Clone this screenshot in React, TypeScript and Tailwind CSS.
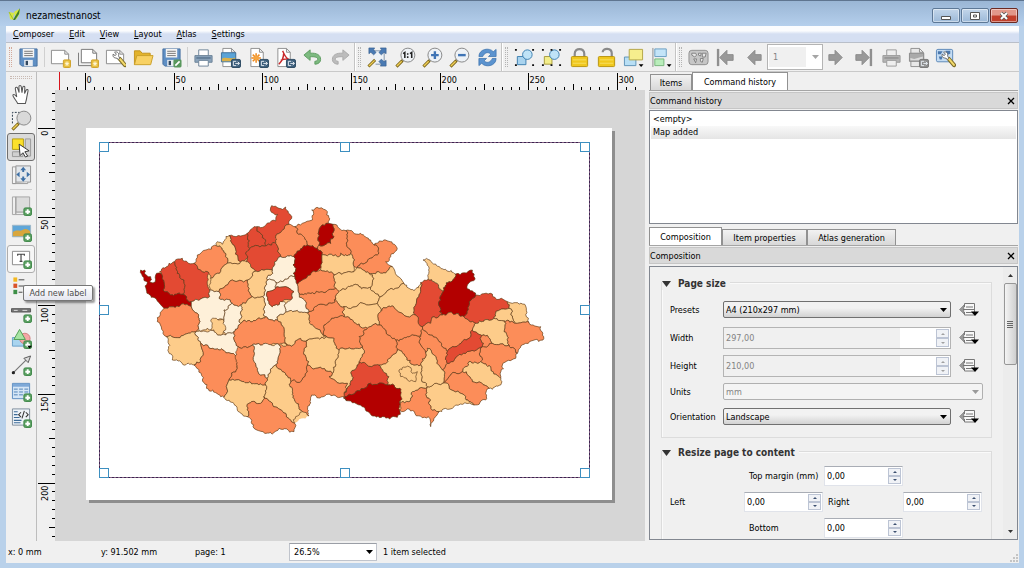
import React from "react";

type Pt = [number, number];

/* ---------- map ---------- */

const SHADES = ["#fef0d9", "#fdcc8a", "#fc8d59", "#e34a33", "#b30000"];

const OUTLINE =
  "35,225 47,225 52,240 65,245 62,260 72,264 80,240 92,230 120,205 137,200 160,190 195,205 205,180 230,165 262,152 265,140 280,148 300,122 355,115 375,95 405,95 440,78 446,58 424,46 428,32 450,40 470,36 478,54 488,70 480,88 497,95 520,85 550,75 548,45 570,40 595,50 598,85 612,88 650,107 695,115 725,135 735,150 770,135 802,155 785,185 770,200 790,215 825,265 855,287 875,263 898,253 945,287 980,237 1030,225 1015,270 1040,300 1090,297 1135,320 1150,325 1190,333 1200,383 1235,395 1242,435 1190,445 1165,475 1160,490 1120,510 1115,550 1115,570 1080,580 1070,615 1035,630 980,630 930,650 905,695 898,665 812,645 805,667 760,665 700,635 652,617 615,600 548,600 540,663 497,685 495,710 450,700 430,717 375,700 355,665 335,655 285,607 275,605 220,555 195,510 130,495 112,425 85,380 105,340 85,318 62,300 52,285 55,262 45,248 38,238";

const DISTRICTS: [number, string][] = [
  [3, "92,230 120,205 137,200 145,235 165,255 160,298 125,300 102,285 105,262 98,238"],
  [3, "137,200 160,190 195,205 240,235 242,285 242,305 215,312 187,320 160,298 165,255 145,235"],
  [4, "35,225 47,225 52,240 65,245 62,260 72,264 80,240 98,238 105,262 102,285 125,300 160,298 187,320 187,335 150,335 105,340 85,318 62,300 52,285 55,262 45,248 38,238"],
  [2, "195,205 205,180 230,165 262,152 290,175 295,205 265,235 245,250 240,235"],
  [1, "262,152 265,140 280,148 300,122 315,150 335,200 295,205 290,175"],
  [3, "300,122 355,115 362,160 350,175 355,190 335,200 315,150"],
  [3, "355,115 375,95 385,95 410,135 412,152 362,160"],
  [3, "385,95 405,95 440,78 446,58 424,46 428,32 450,40 470,36 478,54 488,70 480,88 440,125 440,140 412,152 410,135"],
  [3, "362,160 412,152 440,140 455,185 430,225 380,228 365,215 350,200 355,190 350,175"],
  [2, "480,88 497,95 505,115 530,135 535,150 520,160 495,185 455,185 440,140 440,125"],
  [2, "497,95 520,85 550,75 548,45 570,40 595,50 598,85 575,95 570,150 565,160 535,150 530,135 505,115"],
  [2, "612,88 630,100 650,107 655,140 665,175 635,175 625,185 600,178 578,180 565,160 570,150 605,145 615,125"],
  [4, "575,95 598,85 612,88 615,125 605,145 570,150"],
  [2, "650,107 695,115 725,135 735,150 748,165 745,180 715,200 685,218 675,215 665,175 655,140"],
  [2, "735,150 770,135 802,155 785,185 770,200 790,215 760,235 720,235 685,218 715,200 745,180 748,165"],
  [1, "578,180 600,178 625,185 635,175 665,175 675,215 675,230 615,240 595,228 575,225 575,210"],
  [1, "615,240 675,230 685,218 720,235 735,250 725,277 690,275 630,290 620,280 615,275"],
  [1, "720,235 760,235 790,215 825,265 800,280 755,305 725,277 735,250"],
  [1, "630,290 690,275 725,277 755,305 745,325 645,335 620,310"],
  [1, "755,305 800,280 825,265 855,287 875,263 870,305 860,360 835,365 785,335 755,350 745,325"],
  [3, "875,263 898,253 915,260 945,287 935,315 940,360 915,365 905,385 880,395 860,360 870,305"],
  [1, "898,253 900,230 882,195 920,207 980,237 960,260 945,287 915,260"],
  [3, "1040,300 1090,297 1135,320 1140,340 1100,355 1095,370 1040,385 1005,365 1020,320"],
  [4, "980,237 1030,225 1038,250 1015,270 1040,300 1020,320 1005,365 970,355 940,360 935,315 945,287 960,260"],
  [1, "1135,320 1150,325 1190,333 1200,383 1160,385 1150,350 1140,340"],
  [1, "1140,340 1150,350 1160,385 1125,378 1095,370 1100,355"],
  [2, "1125,378 1160,385 1200,383 1235,395 1242,435 1190,445 1165,475 1140,450 1125,410"],
  [1, "1035,393 1040,385 1095,370 1125,378 1125,410 1140,450 1090,445 1065,420 1030,405"],
  [2, "1060,455 1090,445 1140,450 1165,475 1160,490 1120,510 1115,550 1085,515 1055,500"],
  [2, "880,395 905,385 915,365 940,360 970,355 1005,365 1040,385 1035,393 1030,405 1020,430 970,455 955,470 930,440 895,415"],
  [2, "875,420 880,395 895,415 930,440 955,470 955,505 940,525 915,480 895,460 890,475 875,450"],
  [2, "940,525 955,505 965,500 1010,475 1060,455 1055,500 1020,500 1000,530 960,545 940,565"],
  [3, "955,505 955,470 970,455 1020,430 1030,405 1065,420 1060,455 1010,475 965,500"],
  [2, "1065,420 1090,445 1060,455"],
  [1, "1000,530 1020,500 1055,500 1085,515 1115,550 1115,570 1080,580 1030,560"],
  [2, "960,545 1000,530 1030,560 1080,580 1070,615 1035,630 1010,605 960,580 955,565 940,565"],
  [1, "895,575 940,565 955,565 960,580 1010,605 1035,630 980,630 930,650 905,640 900,610"],
  [2, "812,625 840,620 850,590 870,580 895,575 900,610 905,640 930,650 905,695 898,665 812,645"],
  [3, "645,595 668,540 690,500 750,510 780,545 775,570 680,590 645,610"],
  [1, "775,495 805,465 830,485 855,510 875,510 880,545 895,575 870,580 850,590 840,620 812,625 813,580 775,570 780,545 750,510"],
  [1, "810,525 840,515 850,535 865,530 860,560 835,555 815,545"],
  [4, "645,610 680,590 775,570 813,580 812,645 805,667 760,665 700,635 652,617"],
  [1, "875,510 890,475 895,460 915,480 940,525 940,565 895,575 880,545"],
  [2, "800,435 835,425 875,420 875,450 890,475 875,510 855,510 830,485 805,465"],
  [2, "750,390 755,350 785,335 835,365 860,360 880,395 875,420 835,425 800,435 770,405"],
  [1, "645,335 745,325 755,350 750,390 715,400 680,385 645,365 640,350"],
  [2, "690,425 715,400 750,390 770,405 800,435 805,465 775,495 750,510 690,500 700,455"],
  [2, "585,390 605,375 645,365 680,385 715,400 690,425 700,455 680,460 630,465 615,430 592,425"],
  [1, "630,465 680,460 700,455 690,500 668,540 645,595 655,565 600,545 610,535"],
  [1, "535,435 592,425 615,430 630,465 610,535 560,520 535,510"],
  [2, "535,510 560,520 610,535 600,545 655,565 645,595 645,610 652,617 615,600 548,600 540,663 520,650 490,590 485,560 515,560"],
  [2, "450,450 475,450 515,430 535,435 535,510 515,560 485,560 460,530 440,510"],
  [2, "535,355 540,350 590,330 620,310 645,335 640,350 645,365 605,375 585,390 592,425 550,390"],
  [1, "450,360 470,350 540,350 535,355 550,390 592,425 535,435 515,430 475,450 465,415 445,375"],
  [2, "510,295 545,295 580,290 620,280 630,290 620,310 590,330 540,350 530,330"],
  [2, "505,268 530,250 560,230 575,225 595,228 615,240 615,275 620,280 580,290 545,295 510,295"],
  [0, "430,225 455,185 495,185 492,210 500,225 498,245 460,260 440,262 415,255"],
  [0, "440,262 460,260 498,245 505,268 510,295 530,330 540,350 470,350 470,325 485,315 495,290 470,275 440,280"],
  [0, "415,255 440,262 440,280 415,290 430,335 460,320 470,325 470,350 450,360 445,375 410,365 410,330 400,305"],
  [3, "415,290 440,280 470,275 495,290 485,315 460,320 430,335"],
  [4, "495,185 520,160 535,150 565,160 578,180 575,210 560,230 530,250 505,268 498,245 500,225 492,210"],
  [1, "355,255 370,235 380,228 430,225 415,255 400,305 370,305 360,280"],
  [1, "265,235 295,205 335,200 355,190 350,200 365,215 380,228 370,235 355,255 310,255 270,290 242,285 245,250"],
  [2, "270,290 310,255 355,255 360,280 370,305 350,325 335,330 310,325 270,310"],
  [1, "335,330 350,325 370,305 400,305 410,330 410,365 345,375 335,385 340,345"],
  [0, "187,320 215,312 242,305 242,285 270,290 270,310 310,325 285,345 285,375 260,375 245,405 205,405 210,370 205,355 187,335"],
  [0, "310,325 335,330 340,345 335,385 315,410 290,420 285,375 285,345"],
  [0, "200,410 245,405 275,420 290,420 315,410 328,455 328,480 270,465 235,450 215,445"],
  [1, "245,378 262,370 285,378 290,405 275,420 245,405"],
  [2, "105,340 150,335 187,335 205,355 210,370 205,405 200,410 112,425 85,380"],
  [1, "112,425 200,410 215,445 215,500 195,510 130,495"],
  [2, "215,445 235,450 270,465 328,480 325,520 300,555 285,607 275,605 220,555 195,510 215,500"],
  [2, "315,410 335,385 345,375 410,365 445,375 465,415 475,450 410,445 370,450 328,455"],
  [2, "328,455 370,450 375,500 395,540 415,550 410,570 345,560 300,555 325,520"],
  [0, "370,450 410,445 450,450 440,510 425,530 415,550 395,540 375,500"],
  [1, "300,555 345,560 410,570 405,605 395,625 360,625 355,665 335,655 285,607"],
  [1, "440,510 460,530 485,560 490,590 520,650 500,665 497,685 470,655 405,605 410,570 415,550 425,530"],
  [2, "405,605 470,655 497,685 495,710 450,700 430,717 375,700 355,665 360,625 395,625"],
];

const noise = (a: Pt, b: Pt) => {
  const n = Math.sin(a[0] * 12.9898 + a[1] * 78.233 + b[0] * 37.719 + b[1] * 9.131) * 43758.5453;
  return (n - Math.floor(n)) * 2 - 1;
};

/* Splits an edge into a rough border line; both neighbours of an edge get the same line. */
function roughen(a: Pt, b: Pt): Pt[] {
  const flip = a[0] > b[0] || (a[0] === b[0] && a[1] > b[1]);
  const [p, q] = flip ? [b, a] : [a, b];
  const dx = q[0] - p[0];
  const dy = q[1] - p[1];
  const len = Math.hypot(dx, dy);
  if (len < 8) return [a];
  const k = noise(p, q) * (len > 24 ? 0.16 : 0.3);
  const m: Pt = [(p[0] + q[0]) / 2 - dy * k, (p[1] + q[1]) / 2 + dx * k];
  return [...roughen(a, m), ...roughen(m, b)];
}

function toPath(list: string) {
  const pts = list.split(" ").map((s) => s.split(",").map(Number) as Pt);
  const out = pts.flatMap((p, i) => roughen(p, pts[(i + 1) % pts.length]));
  return "M" + out.map((p) => p[0].toFixed(1) + " " + p[1].toFixed(1)).join("L") + "Z";
}

const RegionMap = () => (
  <svg viewBox="0 0 1290 735" className="absolute left-[30px] top-[53px] h-[245px] w-[430px]" role="img" aria-label="Map">
    <path d={toPath(OUTLINE)} fill="#fdcc8a" />
    {DISTRICTS.map(([c, d], i) => (
      <path key={i} d={toPath(d)} fill={SHADES[c]} stroke="#5c3a1c" strokeOpacity={0.85} strokeWidth={2.3} strokeLinejoin="round" />
    ))}
  </svg>
);

/* ---------- icons ---------- */

const Ico = ({ children }: { children: React.ReactNode }) => (
  <svg viewBox="0 0 22 22" className="h-[21px] w-[21px]" aria-hidden="true" fill="none">
    {children}
  </svg>
);

const Plus = () => (
  <g>
    <rect x="13.5" y="13.5" width="8" height="8" rx="1.5" fill="#5aa061" stroke="#3f8748" />
    <path d="M17.5 15v5M15 17.5h5" stroke="#fff" strokeWidth="2" />
  </g>
);
const Star = () => (
  <g>
    <rect x="14" y="13.5" width="7.500" height="8" rx="1" fill="#e7bd3a" stroke="#cfa12a" />
    <path d="M17.800 15v5M15.500 17.500h4.600M16.200 15.900l3.200 3.200M19.400 15.900l-3.200 3.200" stroke="#fff8d8" strokeWidth="1" />
  </g>
);
const Export = ({ grey }: { grey?: boolean }) => (
  <g>
    <rect x="12" y="13" width="9.500" height="8.500" rx="1.500" fill={grey ? "#8d8d8d" : "#3d5f7c"} stroke={grey ? "#777" : "#2c4a63"} />
    <path d="M17 15h-3v4.500h3M16 17.200h4M18.500 15.500l2 1.700-2 1.700" stroke="#e8eef4" strokeWidth="1" />
  </g>
);
const Sheet = () => <path d="M1.500 3.500h14l4 4v10h-18zM15.500 3.500v4h4" fill="#fff" stroke="#8b8b8b" />;
const Doc = ({ grey }: { grey?: boolean }) => (
  <path d="M3 1.500h9l4 4v15H3zM12 1.500v4h4" fill={grey ? "#e8e8e8" : "#fff"} stroke="#8f8f8f" />
);
const Floppy = () => (
  <g>
    <path d="M2 2h18v18H4l-2-2z" fill="#5f8fc4" stroke="#47709f" />
    <path d="M5 2h12v9H5z" fill="#f4f4f4" />
    <path d="M6.500 4.500h9M6.500 6.700h9M6.500 9h9" stroke="#777" strokeWidth="1" />
    <path d="M6.500 13.500h9v6.500h-9z" fill="#e9edf2" />
    <path d="M8 14.500h2.500v4.500H8z" fill="#31475e" />
  </g>
);
const Wrench = ({ x = 0 }: { x?: number }) => (
  <g transform={`translate(${x} 0)`}>
    <path d="M13.500 12.500l5.500 6.500" stroke="#7a6a28" strokeWidth="4.200" strokeLinecap="round" />
    <path d="M13.800 12.700l5 6" stroke="#f3d96a" strokeWidth="2.200" strokeLinecap="round" />
    <path d="M8 5.500l2 2-1.500 1.500-2-1.500c-.5 2 .5 4 2.500 4 1 0 2 .5 3 1.500l1.500-1.500c-1-1-1.500-2-1.200-3.200.5-2-1.800-4-4.300-2.800z" fill="#fff" stroke="#666" />
  </g>
);
const Printer = ({ grey }: { grey?: boolean }) => (
  <g stroke={grey ? "#9a9a9a" : "#6d8398"}>
    <path d="M6 9V3h10v6" fill={grey ? "#eee" : "#fff"} />
    <path d="M2 9h18v7H2z" fill={grey ? "#b4b4b4" : "#8aa3bb"} />
    <path d="M3.500 11.500h15" stroke={grey ? "#8a8a8a" : "#506c87"} strokeWidth="1.300" />
    <path d="M6 14h10v6H6z" fill={grey ? "#eee" : "#fff"} />
  </g>
);
const Lens = ({ children, grey }: { children?: React.ReactNode; grey?: boolean }) => (
  <g>
    <path d="M1.500 20.500l6.500-6.500" stroke="#7a6419" strokeWidth="3.200" />
    <path d="M2 20l5-5" stroke="#f0cf55" strokeWidth="1.500" />
    <circle cx="13.500" cy="8.500" r="7.300" fill={grey ? "#d9d9d9" : "#eef2f6"} stroke="#858585" />
    {children}
  </g>
);
const Lock = ({ open }: { open?: boolean }) => (
  <g>
    <path d={open ? "M7 5.500c0-5 9.500-5 9.500 1V11" : "M6 11V7c0-6.500 10-6.500 10 0v4"} stroke="#8a8a8a" strokeWidth="2.300" />
    <rect x="2.500" y="10" width="17" height="10.500" rx="1" fill="#f0c81e" stroke="#b8930f" />
    <path d="M4 13.500h14M4 17h14" stroke="#f8df62" />
  </g>
);
const Arrow = ({ left, bar }: { left?: boolean; bar?: boolean }) => (
  <g transform={left ? "translate(22 0) scale(-1 1)" : undefined}>
    <path d="M3 8h6.500V3.500L17 11l-7.500 7.500V14H3z" fill="#999" stroke="#8a8a8a" />
    {bar && <path d="M18.800 2v18" stroke="#8f8f8f" strokeWidth="2.500" />}
  </g>
);
const Drop = () => <path d="M16.500 18h5l-2.500 3z" fill="#000" />;
const Dots = () => (
  <path d="M1 2h2v2H1zM19 2h2v2h-2zM1 18h2v2H1zM19 18h2v2h-2zM10 2h2v2h-2zM10 18h2v2h-2z" fill="#111" />
);

const FILE_ICONS: [string, React.ReactNode][] = [
  ["New composition", <><Sheet /><Star /></>],
  ["Duplicate composition", <><path d="M.5 6v13.500h17" stroke="#777" /><path d="M3.500 2.500h12l4 4v10h-16zM15.500 2.500v4h4" fill="#fff" stroke="#777" /><Star /></>],
  ["Composition manager", <><Sheet /><Wrench x={2} /></>],
  ["Open template", <><path d="M1.500 18.500V4h6l2 2.500h8.500v4" fill="#e2b32c" stroke="#c2931b" /><path d="M1.500 18.500l2.500-9.500h17l-2.500 9.500z" fill="#f8d163" stroke="#c99f2a" /></>],
  ["Save as template", <><Floppy /><rect x="13" y="13" width="8.500" height="8.500" rx="1.500" fill="#58975c" /><path d="M15 19.500l4.500-4.500" stroke="#fff" strokeWidth="1.800" /></>],
];
const EXPORT_ICONS: [string, React.ReactNode][] = [
  ["Print", <Printer />],
  ["Export as image", <><Doc /><path d="M1.500 6h15v9.500h-15z" fill="#5aa3d6" stroke="#3f6f99" /><path d="M2 12.500c3-3 8 1 14-1.500v4H2z" fill="#d9b04a" /><Export /></>],
  ["Export as SVG", <><Doc /><path d="M8.500 6.500v10M3.500 11.500h10M5 8l7 7M12 8l-7 7" stroke="#ef8a1d" strokeWidth="1.600" /><circle cx="8.500" cy="11.500" r="2.300" fill="#f6a540" /><Export /></>],
  ["Export as PDF", <><Doc /><path d="M8 4c2 4 3 8 7 9M9 7c0 4-2 8-5 11M6 14c3-1.500 6-2 9-1" stroke="#c8282b" strokeWidth="1.500" /><Export /></>],
  ["Undo", <path d="M2 8.500L8.500 3v3.500c7-.5 11 2 11 6.500 0 3-2.500 5-6 5v-3c2 0 3-1 3-2.200 0-2-3-2.800-8-2.600V14z" fill="#7dba80" stroke="#5d9c61" />],
  ["Redo", <path d="M20 8.500L13.500 3v3.500c-7-.5-11 2-11 6.500 0 3 2.500 5 6 5v-3c-2 0-3-1-3-2.200 0-2 3-2.800 8-2.600V14z" fill="#bcbcbc" stroke="#aaa" />],
];
const ZOOM_ICONS: [string, React.ReactNode][] = [
  ["Zoom full", <><path d="M6 4h12v14H9" fill="#eef2f6" stroke="#7f93a8" /><path d="M2 1h6L6.800 3l2.700 2.700-2.500 2.500-3-2.700L2 7zM20 1h-6l1.200 2-2.700 2.700L15 8.200l3-2.700L20 7zM20 20h-6l1.200-2-2.700-2.700L15 12.800l3 2.700 2-1.500z" fill="#4a7ab3" stroke="#365e8f" strokeWidth=".7" /><path d="M1.500 20.500l7-7" stroke="#7a6419" strokeWidth="3" /><path d="M2 20l6-6" stroke="#f0cf55" strokeWidth="1.400" /></>],
  ["Zoom 1:1", <Lens><path d="M8.500 7l1.800-1.200v5.700M15.700 7l1.800-1.200v5.700" stroke="#222" strokeWidth="1.600" /><path d="M12.500 6.500h1.600v1.600h-1.600zM12.500 9.800h1.600v1.600h-1.600z" fill="#222" /></Lens>],
  ["Zoom in", <Lens><path d="M13.500 4.500v8M9.500 8.500h8" stroke="#3f74b5" strokeWidth="2.500" /></Lens>],
  ["Zoom out", <Lens><path d="M9.500 8.500h8" stroke="#3f74b5" strokeWidth="2.500" /></Lens>],
  ["Refresh view", <><path d="M2 10c0-8 11-10 15-5l3-2.500V10h-8l2.500-2.500c-3-3-7-1.500-8.500 2.500z" fill="#5b93cf" stroke="#3d72ad" strokeWidth=".8" /><path d="M20 12c0 8-11 10-15 5l-3 2.500V12h8l-2.500 2.500c3 3 7 1.500 8.500-2.500z" fill="#5b93cf" stroke="#3d72ad" strokeWidth=".8" /></>],
];
const ITEM_ICONS: [string, React.ReactNode][] = [
  ["Group items", <><path d="M3.500 10h9v8.500h-9z" fill="#a9d3ee" stroke="#3d7fb0" /><circle cx="14" cy="8" r="5" fill="#bfe3f7" stroke="#3d7fb0" /><path d="M1 2h2v2H1zM19 2h2v2h-2zM1 18h2v2H1zM19 18h2v2h-2z" fill="#111" /></>],
  ["Ungroup items", <><path d="M3.500 10h8v8h-8z" fill="#f3ee8a" stroke="#a79a3c" /><circle cx="14" cy="8" r="5" fill="#bfe3f7" stroke="#3d7fb0" /><Dots /></>],
  ["Lock selected items", <Lock />],
  ["Unlock all items", <Lock open />],
  ["Raise selected items", <><path d="M1.500 10.500h12v9h-12z" fill="#b8dff5" stroke="#5d93b8" /><path d="M6.500 2.500h14v11h-14z" fill="#f6ee8d" stroke="#b3a545" /><Drop /></>],
  ["Align selected items", <><path d="M2 1v20" stroke="#888" /><path d="M4 2h12v8H4z" fill="#c3e4f8" stroke="#6a9dc2" /><path d="M4 12.500h9.500v7H4z" fill="#b9edbb" stroke="#77b57b" /><Drop /></>],
];
const ATLAS_A: [string, React.ReactNode][] = [
  ["Preview atlas", <><rect x="1" y="3.500" width="20" height="15" rx="3" fill="#c6c6c6" stroke="#8f8f8f" /><path d="M4 6.500h4l1 2-2 2-3-2zM11 6.500h3l-1 3-2-1zM15 6.500h4l-1 4h-3zM6 12.500h3l-1 4zM13 12h3l-1 4-2-1z" fill="#e6e6e6" stroke="#777" strokeWidth=".9" /></>],
  ["First feature", <Arrow left bar />],
  ["Previous feature", <Arrow left />],
];
const ATLAS_B: [string, React.ReactNode][] = [
  ["Next feature", <Arrow />],
  ["Last feature", <Arrow bar />],
  ["Print atlas", <Printer grey />],
  ["Export atlas", <><Doc grey /><path d="M1.500 6.500h15v8.500h-15z" fill="#aaa" stroke="#888" /><path d="M2.500 11.500l4 1 9-2.500v4h-13z" fill="#ddd" /><Export grey /></>],
  ["Atlas settings", <><rect x="1.500" y="2.500" width="17" height="13" rx="1.500" fill="#c4dcf3" stroke="#5a86b8" /><path d="M3 4.500h5l-2 3H3zM11 4h5v3l-3 1zM4 10h4l-1 3H5z" fill="#4a78ae" /><Wrench x={1} /></>],
];

const MOVE_TOOLS: [string, React.ReactNode][] = [
  ["Pan composer", <path d="M7 20.500c-1-3-5.500-7-5-9 1-1.500 3 .5 4 2L4.500 5c0-2 2-2 2.500-.5L8.500 9 8.300 3c0-2 2.200-2 2.500 0l.7 6 .8-5.500c.4-1.800 2.300-1.500 2.200.3L14.200 10l1.600-3.500c.8-1.500 2.500-.7 2 1L16.500 14c-.3 3-1 4.500-1.500 6.500z" fill="#fff" stroke="#555" strokeWidth="1.100" />],
  ["Zoom", <><path d="M1.500 14V2.500H9" stroke="#234" strokeDasharray="2 1.500" /><Lens grey /></>],
  ["Select/Move item", <><path d="M1.500 15.500h11v5h-11zM15 2h5.500v18H15z" fill="#d0d0d0" stroke="#999" /><path d="M1.500 2h11.500v11h-11.500z" fill="#fce12b" stroke="#b39c14" /><path d="M8.500 7.500l10.500 7-4.500 1 3 4.500-2.500 1-2.500-4.500-3 3z" fill="#fff" stroke="#333" /></>],
  ["Move item content", <><path d="M5 2h15.500v17H5z" fill="#e3e7eb" stroke="#909090" /><path d="M1.500 3H5v17.500H1.500zM1.500 20.500h16V19" fill="#f4f4f4" stroke="#999" /><path d="M12.800 3l3 3.500h-6zM12.800 18.500l3-3.500h-6zM5.500 11L9 8v6zM20 11l-3.500-3v6zM11.800 6.500h2v2h-2zM11.800 13h2v2h-2z" fill="#3d6fa5" /></>],
];
const ADD_TOOLS: [string, React.ReactNode][] = [
  ["Add new map", <><path d="M5 2h14.500v16H5z" fill="#dcdcdc" stroke="#a5a5a5" /><path d="M1.500 2H5v18.500h14.500V18H5M1.500 2v18.500H5V2" fill="#ececec" stroke="#a5a5a5" /><Plus /></>],
  ["Add image", <><path d="M1.500 4.500h19v12h-19z" fill="#5fa6d8" stroke="#9bb6c6" /><path d="M2 11.500c5-3 7 0 10-2s5-1 8 1V16H2z" fill="#d8a63c" /><Plus /></>],
  ["Add new label", <><path d="M1.500 3.500h18v14h-18z" fill="#fff" stroke="#888" /><path d="M7 8V6.500h7V8M10.500 6.500v7.500M9 14h3" stroke="#444" strokeWidth="1.200" /><Plus /></>],
  ["Add new legend", <><path d="M2.500 1.500h4v4.500h-4z" fill="#f4b81f" /><path d="M2.500 8h4v4.500h-4z" fill="#d9532a" /><path d="M2.500 14.500h4v4.500h-4z" fill="#3d8f46" /><path d="M8 4h6M8 10.500h6M8 17h4" stroke="#444" /></>],
  ["Add new scalebar", <><path d="M.5 7h20v3.500H.5z" fill="#777" stroke="#555" /><path d="M3 8.800h4M12 8.800h5" stroke="#ddd" /><Plus /></>],
  ["Add basic shape", <><path d="M1.500 10h12v9h-12z" fill="#a9d4ef" stroke="#68a0c8" /><circle cx="14.500" cy="11" r="5.500" fill="#f4a7a5" stroke="#cf7d7b" /><path d="M9 1.500l6 10.500H3z" fill="#a7e4a3" stroke="#4e9e50" /><Plus /><path d="M17 18.500h5l-2.500 3z" fill="#000" /></>],
  ["Add arrow", <><path d="M2 19L17 4" stroke="#777" strokeWidth="1.200" /><path d="M20.500 1l-2.500 7-4.500-4.500z" fill="#ddd" stroke="#555" /><circle cx="2.500" cy="18.500" r="1.700" fill="#222" /><Plus /></>],
  ["Add attribute table", <><path d="M1.500 2.500h18v16h-18z" fill="#d5e6f6" stroke="#5b8cc0" /><path d="M2 3h17v3H2z" fill="#7ea9d8" /><path d="M3 8.500h4M8.500 8.500h4M14 8.500h4M3 11.500h4M8.500 11.500h4M14 11.500h4M3 14.500h4M8.500 14.500h4" stroke="#4d7fb5" /><Plus /></>],
  ["Add html frame", <><path d="M1.500 2h18v17h-18z" fill="#eef3f8" stroke="#7d8c9a" /><path d="M3 5h4M3 8h4M3 11h6M3 14h8M3 16.500h7" stroke="#3c6b98" strokeWidth="1.200" /><path d="M10.500 5.500L8 8l2.500 2.500M15.500 5.500L18 8l-2.500 2.500M14 4l-2.500 8" stroke="#333" strokeWidth="1.100" /><Plus /></>],
];

/* ---------- toolbar parts ---------- */

const Tools = ({ items, className }: { items: [string, React.ReactNode][]; className: string }) => (
  <div className={`flex shrink-0 ${className}`}>
    {items.map(([label, icon]) => (
      <button key={label} aria-label={label} className="flex h-full min-w-0 flex-1 items-center justify-center">
        <Ico>{icon}</Ico>
      </button>
    ))}
  </div>
);

const Grip = () => (
  <div className="flex w-[10px] shrink-0 justify-center border-l border-[#c4c4c4] shadow-[inset_1px_0_0_#fff]">
    <span className="my-[4px] w-[3px] border-x border-dotted border-[#b4b4b4]" />
  </div>
);

/* ---------- rulers ---------- */

const MM = 8.865;

const TopRuler = () => (
  <svg className="block h-[18px] w-full bg-[#f0f0f0]" aria-hidden="true">
    <path d="M4.500 0V18" stroke="#d8141c" />
    {Array.from({ length: 65 }, (_, i) => i - 2).map((n) => {
      const x = Math.round(31 + n * MM) - 0.5;
      const major = n % 10 === 0;
      return (
        <g key={n}>
          <path d={`M${x} 18V${major ? 1 : n % 5 === 0 ? 12 : 15}`} stroke="#000" />
          {major && (
            <text x={x + 1} y="11" fontSize="9" fill="#000">
              {n * 5}
            </text>
          )}
        </g>
      );
    })}
  </svg>
);

const LeftRuler = () => (
  <svg className="block h-full w-[18px] bg-[#f0f0f0]" aria-hidden="true">
    {Array.from({ length: 51 }, (_, i) => i - 4).map((n) => {
      const y = Math.round(56 + n * MM) + 0.5;
      const major = n % 10 === 0;
      return (
        <g key={n}>
          <path d={`M18 ${y}H${major ? 1 : n % 5 === 0 ? 12 : 15}`} stroke="#000" />
          {major && (
            <text transform={`translate(11 ${y + 2}) rotate(-90)`} textAnchor="end" fontSize="9" fill="#000">
              {n * 5}
            </text>
          )}
        </g>
      );
    })}
  </svg>
);

/* ---------- form parts ---------- */

const Combo = ({ id, value, disabled, className }: { id: string; value: string; disabled?: boolean; className: string }) => (
  <div className={`relative ${className}`}>
    <select
      id={id}
      disabled={disabled}
      className="h-[17px] w-full appearance-none rounded-[2px] border border-[#707070] bg-linear-to-b from-[#f2f2f2] from-40% to-[#d2d2d2] pl-[2px] text-black disabled:border-[#b0b0b0] disabled:bg-[#f4f4f4] disabled:bg-none disabled:text-[#838383] disabled:opacity-100"
    >
      <option>{value}</option>
    </select>
    <svg viewBox="0 0 7 4" className="pointer-events-none absolute right-[4px] top-[7px] h-[4px] w-[7px]" aria-hidden="true">
      <path d="M0 0h7L3.500 4z" fill={disabled ? "#9a9a9a" : "#000"} />
    </svg>
  </div>
);

const Steps = ({ off }: { off?: boolean }) => (
  <span className={`my-px mr-px flex w-[13px] shrink-0 flex-col ${off ? "text-[#a0a0a0]" : "text-[#3c5070]"}`}>
    {["M1 3h4L3 1z", "M1 1h4L3 3z"].map((d, i) => (
      <button
        key={d}
        aria-label={i ? "Decrease" : "Increase"}
        disabled={off}
        className="flex flex-1 items-center justify-center border border-[#bcc4d4] bg-[#f0f2f6]"
      >
        <svg viewBox="0 0 6 4" className="h-[4px] w-[6px]" aria-hidden="true">
          <path d={d} fill="currentColor" />
        </svg>
      </button>
    ))}
  </span>
);

const Spin = ({ id, value, off, className }: { id: string; value: string; off?: boolean; className: string }) => (
  <div className={`flex border ${off ? "h-[22px] border-[#b4b4b4]" : "h-[20px] border-[#e0e3ea] border-t-[#a9adb5]"} bg-white ${className}`}>
    <input
      id={id}
      defaultValue={value}
      disabled={off}
      className="min-w-0 flex-1 bg-white pl-[2px] text-black disabled:bg-[#f0f0f0] disabled:text-[#838383]"
    />
    {off && <span className="w-[36px] shrink-0" />}
    <Steps off={off} />
  </div>
);

const Override = ({ label }: { label: string }) => (
  <button aria-label={label} className="ml-[8px] shrink-0">
    <svg viewBox="0 0 20 16" className="h-[16px] w-[20px]" aria-hidden="true">
      <path d="M.5 7.500L5 3v9z" fill="#999" stroke="#777" strokeWidth=".6" />
      <path d="M5.500 5V1.500h10v11.500H5.500v-3" fill="#f8f8f8" stroke="#777" />
      <path d="M7 5h7M4 7.500h11M7 10.500h7" stroke="#777" />
      <path d="M12 9.500h8l-4 4.500z" fill="#000" />
    </svg>
  </button>
);

const Field = ({ id, label, children }: { id: string; label: string; children: React.ReactNode }) => (
  <div className="flex items-center pl-[8px]">
    <label htmlFor={id} className="w-[53px] shrink-0">
      {label}
    </label>
    {children}
  </div>
);

const Section = ({ title, children, className }: { title: string; children: React.ReactNode; className: string }) => (
  <section className={`relative border border-[#dcdcdc] shadow-[inset_1px_1px_0_#fafafa] ${className}`}>
    <h3 className="absolute -top-[5px] left-0 flex h-[12px] items-center bg-[#f0f0f0] pr-[4px] text-[10px] font-bold text-[#333]">
      <svg viewBox="0 0 9 6" className="mr-[7px] h-[6px] w-[9px]" aria-hidden="true">
        <path d="M0 0h9L4.500 6z" fill="#333" />
      </svg>
      {title}
    </h3>
    {children}
  </section>
);

const DockTitle = ({ children }: { children: React.ReactNode }) => (
  <div className="flex h-[17px] shrink-0 items-center justify-between border border-[#c6c6c6] bg-[#d9d9d9]">
    <h2>{children}</h2>
    <button aria-label="Close" className="mr-[2px]">
      <svg viewBox="0 0 8 8" className="h-[8px] w-[8px]" aria-hidden="true">
        <path d="M1 1l6 6M7 1L1 7" stroke="#000" strokeWidth="1.300" />
      </svg>
    </button>
  </div>
);

const Tab = ({ on, className, children }: { on?: boolean; className: string; children: React.ReactNode }) => (
  <button
    role="tab"
    aria-selected={!!on}
    className={`border border-b-0 border-[#919191] ${on ? "h-[18px] bg-white" : "h-[16px] bg-linear-to-b from-[#f2f2f2] to-[#d8d8d8]"} ${className}`}
  >
    {children}
  </button>
);

const HANDLES = [
  "left-0 top-0",
  "left-[241px] top-0",
  "right-0 top-0",
  "left-0 top-[163px]",
  "right-0 top-[163px]",
  "left-0 bottom-0",
  "left-[241px] bottom-0",
  "right-0 bottom-0",
];

const WinButton = ({ label, className, children }: { label: string; className: string; children: React.ReactNode }) => (
  <button
    aria-label={label}
    className={`flex h-[15px] w-[28px] items-center justify-center rounded-[2px] border shadow-[inset_0_0_0_1px_rgba(255,255,255,.45)] ${className}`}
  >
    <svg viewBox="0 0 12 10" className="h-[10px] w-[12px]" aria-hidden="true">
      {children}
    </svg>
  </button>
);

export default function App() {
  return (
    <div className="flex h-screen flex-col overflow-hidden border-t border-[#5f7590] bg-[#b9d1ea] pb-[5px] pl-[6px] pr-[5px] font-['DejaVu_Sans_Condensed','DejaVu_Sans',sans-serif] text-[9px] leading-[12px] text-black">
      <header className="-ml-[6px] -mr-[5px] flex h-[25px] shrink-0 items-center bg-linear-to-b from-[#9ab6d5] to-[#b5cfec] pl-[8px] pr-[6px]">
        <svg viewBox="0 0 14 14" className="h-[14px] w-[14px]" aria-hidden="true">
          <path d="M1 5l5 1-1 7-3-1zM6 5l2 8 4-7-1-4z" fill="#d8ea3e" />
          <path d="M5 13L12 1l-1 6-4 6z" fill="#3f7d2a" />
          <path d="M1 5l4 7" stroke="#9cba32" />
        </svg>
        <h1 className="ml-[4px] flex-1 pt-[4px] text-[10px]">nezamestnanost</h1>
        <div className="flex gap-px pt-[4px]">
          <WinButton label="Minimize" className="border-[#5d7896] bg-linear-to-b from-[#c3d6ea] to-[#9cb9d8]">
            <path d="M1.500 5.500h9v3h-9z" fill="#fff" stroke="#555" />
          </WinButton>
          <WinButton label="Maximize" className="border-[#5d7896] bg-linear-to-b from-[#c3d6ea] to-[#9cb9d8]">
            <path d="M1.500 1.500h9v7h-9zM4.500 4h3v2h-3z" fill="#fff" stroke="#555" />
          </WinButton>
          <WinButton label="Close" className="border-[#6b2a22] bg-linear-to-b from-[#e2988a] from-45% to-[#c2402c] to-55%">
            <path d="M3 2l6 6M9 2L3 8" stroke="#555" strokeWidth="3.400" />
            <path d="M3 2l6 6M9 2L3 8" stroke="#fff" strokeWidth="2" />
          </WinButton>
        </div>
      </header>

      <nav className="flex h-[16px] shrink-0 items-center gap-[15px] bg-linear-to-b from-[#fbfcfe] from-30% to-[#d5dff2] to-50% pl-[7px]">
        {["Composer", "Edit", "View", "Layout", "Atlas", "Settings"].map((m) => (
          <button key={m}>
            <span className="underline underline-offset-1">{m[0]}</span>
            {m.slice(1)}
          </button>
        ))}
      </nav>

      <div className="flex h-[30px] shrink-0 overflow-hidden border-y border-[#c9c9c9] border-t-[#b9bfc9] bg-[#f0f0f0]">
        <div className="ml-[3px] flex w-[6px] shrink-0">
          <span className="my-[4px] w-[3px] border-x border-dotted border-[#d3a99a]" />
        </div>
        <Tools items={[["Save project", <Floppy />]]} className="w-[27px]" />
        <span className="mx-[2px] my-[4px] w-px shrink-0 bg-[#d0d0d0]" />
        <Tools items={FILE_ICONS} className="w-[138px]" />
        <span className="mx-[2px] my-[4px] w-px shrink-0 bg-[#d0d0d0]" />
        <Tools items={EXPORT_ICONS} className="w-[164px]" />
        <Grip />
        <Tools items={ZOOM_ICONS} className="w-[137px]" />
        <Grip />
        <Tools items={ITEM_ICONS} className="w-[164px]" />
        <Grip />
        <Tools items={ATLAS_A} className="w-[82px]" />
        <div className="my-px flex w-[56px] shrink-0 items-center border border-[#b4b4b4] bg-white">
          <input
            aria-label="Atlas feature"
            disabled
            defaultValue="1"
            className="my-[2px] ml-px h-[20px] w-[37px] bg-[#f0f0f0] pl-[4px] text-[#838383]"
          />
          <svg viewBox="0 0 7 4" className="ml-[6px] h-[4px] w-[7px] shrink-0" aria-hidden="true">
            <path d="M0 0h7L3.500 4z" fill="#a5a5a5" />
          </svg>
        </div>
        <Tools items={ATLAS_B} className="w-[136px]" />
      </div>

      <div className="flex min-h-0 flex-1 bg-[#f0f0f0]">
        <aside className="relative flex w-[31px] shrink-0 flex-col border-r border-[#bdbdbd]">
          <span className="mx-[4px] mt-[4px] h-[3px] shrink-0 border-y border-dotted border-[#c9bab3]" />
          <div className="mt-[2px] flex h-[106px] shrink-0 flex-col">
            {MOVE_TOOLS.map(([label, icon], i) => (
              <button
                key={label}
                aria-label={label}
                className={`mx-px flex min-h-0 flex-1 items-center justify-center ${i === 2 ? "rounded-[3px] border border-[#6f6f6f] bg-[#dadada]" : ""}`}
              >
                <Ico>{icon}</Ico>
              </button>
            ))}
          </div>
          <span className="mx-[4px] my-[2px] h-px shrink-0 bg-[#d0d0d0]" />
          <div className="flex h-[239px] shrink-0 flex-col">
            {ADD_TOOLS.map(([label, icon], i) => (
              <button
                key={label}
                aria-label={label}
                className={`mx-px flex min-h-0 flex-1 items-center justify-center ${i === 2 ? "rounded-[3px] border border-[#adadad] bg-[#f6f6f6]" : ""}`}
              >
                <Ico>{icon}</Ico>
              </button>
            ))}
          </div>
          <div
            role="tooltip"
            className="absolute left-[17px] top-[213px] z-10 flex h-[16px] w-[70px] items-center justify-center whitespace-nowrap rounded-[2px] border border-[#767676] bg-linear-to-b from-white to-[#e6e7f0] text-[#4c4c4c] shadow-[2px_2px_2px_rgba(0,0,0,.4)]"
          >
            Add new label
          </div>
        </aside>

        <LeftRuler />

        <main className="flex min-w-0 flex-1 flex-col">
          <TopRuler />
          <div className="relative min-h-0 flex-1 overflow-hidden bg-[#d6d6d6]">
            <div className="absolute left-[31px] top-[38px] h-[372px] w-[526px] bg-white shadow-[3px_3px_0_#8e8e8e]">
              <div className="absolute left-[13px] top-[14px] h-[336px] w-[491px]">
                <svg className="absolute inset-0 h-full w-full" aria-hidden="true" fill="none">
                  <rect x="0.5" y="0.5" width="490" height="335" stroke="#c79ab0" />
                  <rect x="0.5" y="0.5" width="490" height="335" stroke="#3a2350" strokeDasharray="3 1" />
                </svg>
                <RegionMap />
                {HANDLES.map((p) => (
                  <span key={p} className={`absolute h-[10px] w-[10px] border border-[#3d8fc0] bg-white ${p}`} />
                ))}
              </div>
            </div>
          </div>
        </main>

        <aside className="ml-[4px] mr-px flex w-[369px] shrink-0 flex-col">
          <div role="tablist" className="mt-px flex h-[18px] shrink-0 items-end border-b border-[#a5a5a5] pl-px">
            <Tab className="w-[42px]">Items</Tab>
            <Tab on className="w-[96px]">
              Command history
            </Tab>
          </div>
          <div className="mt-px shrink-0">
            <DockTitle>Command history</DockTitle>
          </div>
          <ul className="mt-px h-[114px] shrink-0 border border-[#828790] bg-white pt-[2px] leading-[13px]">
            <li className="px-[3px]">&lt;empty&gt;</li>
            <li className="mx-px bg-linear-to-b from-[#f8f8f8] to-[#e5e5e5] px-[2px]">Map added</li>
          </ul>
          <div role="tablist" className="mt-[4px] flex h-[18px] shrink-0 items-end border-b border-[#a5a5a5]">
            <Tab on className="w-[73px]">
              Composition
            </Tab>
            <Tab className="w-[85px]">Item properties</Tab>
            <Tab className="w-[89px]">Atlas generation</Tab>
          </div>
          <div className="mt-px shrink-0">
            <DockTitle>Composition</DockTitle>
          </div>
          <div className="mb-px mt-[2px] flex min-h-0 flex-1 border border-[#828790]">
            <form className="min-w-0 flex-1 overflow-hidden pl-[11px] pr-[11px] pt-[15px]">
              <Section title="Page size" className="flex h-[156px] flex-col pt-[18px]">
                <Field id="presets" label="Presets">
                  <Combo id="presets" value="A4 (210x297 mm)" className="w-[228px]" />
                  <Override label="Presets override" />
                </Field>
                <div className="mt-[9px]">
                  <Field id="width" label="Width">
                    <Spin id="width" value="297,00" off className="w-[228px]" />
                    <Override label="Width override" />
                  </Field>
                </div>
                <div className="mt-[6px]">
                  <Field id="height" label="Height">
                    <Spin id="height" value="210,00" off className="w-[228px]" />
                    <Override label="Height override" />
                  </Field>
                </div>
                <div className="mt-[6px]">
                  <Field id="units" label="Units">
                    <Combo id="units" value="mm" disabled className="w-[260px]" />
                  </Field>
                </div>
                <div className="mt-[8px]">
                  <Field id="orientation" label="Orientation">
                    <Combo id="orientation" value="Landscape" className="w-[228px]" />
                    <Override label="Orientation override" />
                  </Field>
                </div>
              </Section>
              <Section title="Resize page to content" className="mt-[13px] flex h-[120px] flex-col gap-[6px] pt-[14px]">
                <div className="flex items-center pl-[87px]">
                  <label htmlFor="top" className="w-[75px] shrink-0">
                    Top margin (mm)
                  </label>
                  <Spin id="top" value="0,00" className="w-[79px]" />
                </div>
                <div className="flex items-center pl-[8px]">
                  <label htmlFor="left" className="w-[74px] shrink-0">
                    Left
                  </label>
                  <Spin id="left" value="0,00" className="w-[79px]" />
                  <label htmlFor="right" className="ml-[5px] w-[75px] shrink-0">
                    Right
                  </label>
                  <Spin id="right" value="0,00" className="w-[79px]" />
                </div>
                <div className="flex items-center pl-[87px]">
                  <label htmlFor="bottom" className="w-[75px] shrink-0">
                    Bottom
                  </label>
                  <Spin id="bottom" value="0,00" className="w-[79px]" />
                </div>
              </Section>
            </form>
            <div className="flex w-[14px] shrink-0 flex-col items-center bg-[#ececec]">
              <svg viewBox="0 0 7 4" className="my-[6px] h-[4px] w-[7px] shrink-0" aria-hidden="true">
                <path d="M1 4h5L3.500 1z" fill="#333" />
              </svg>
              <div className="flex h-[82px] w-[13px] shrink-0 flex-col items-center justify-center gap-px rounded-[2px] border border-[#979797] bg-linear-to-r from-[#f4f4f4] to-[#cfcfcf]">
                <span className="h-px w-[6px] bg-[#666]" />
                <span className="h-px w-[6px] bg-[#666]" />
                <span className="h-px w-[6px] bg-[#666]" />
                <span className="h-px w-[6px] bg-[#666]" />
              </div>
              <svg viewBox="0 0 7 4" className="mb-[5px] mt-auto h-[4px] w-[7px] shrink-0" aria-hidden="true">
                <path d="M1 0h5L3.500 3z" fill="#333" />
              </svg>
            </div>
          </div>
        </aside>
      </div>

      <footer className="flex h-[22px] shrink-0 items-center bg-[#f0f0f0] pl-[2px]">
        <span className="w-[93px]">x: 0 mm</span>
        <span className="w-[94px]">y: 91.502 mm</span>
        <span className="w-[94px]">page: 1</span>
        <div className="relative w-[88px]">
          <select
            aria-label="Zoom"
            className="h-[18px] w-full appearance-none border border-[#c0c4cc] border-t-[#9a9ea6] bg-white pl-[4px]"
          >
            <option>26.5%</option>
          </select>
          <svg viewBox="0 0 7 4" className="pointer-events-none absolute right-[4px] top-[7px] h-[4px] w-[7px]" aria-hidden="true">
            <path d="M0 0h7L3.500 4z" fill="#000" />
          </svg>
        </div>
        <span className="ml-[6px] flex-1">1 item selected</span>
        <svg viewBox="0 0 9 9" className="h-[9px] w-[9px] self-end" aria-hidden="true">
          <path d="M6 0h2v2H6zM3 3h2v2H3zM6 3h2v2H6zM0 6h2v2H0zM3 6h2v2H3zM6 6h2v2H6z" fill="#c4c4c4" />
        </svg>
      </footer>
    </div>
  );
}
